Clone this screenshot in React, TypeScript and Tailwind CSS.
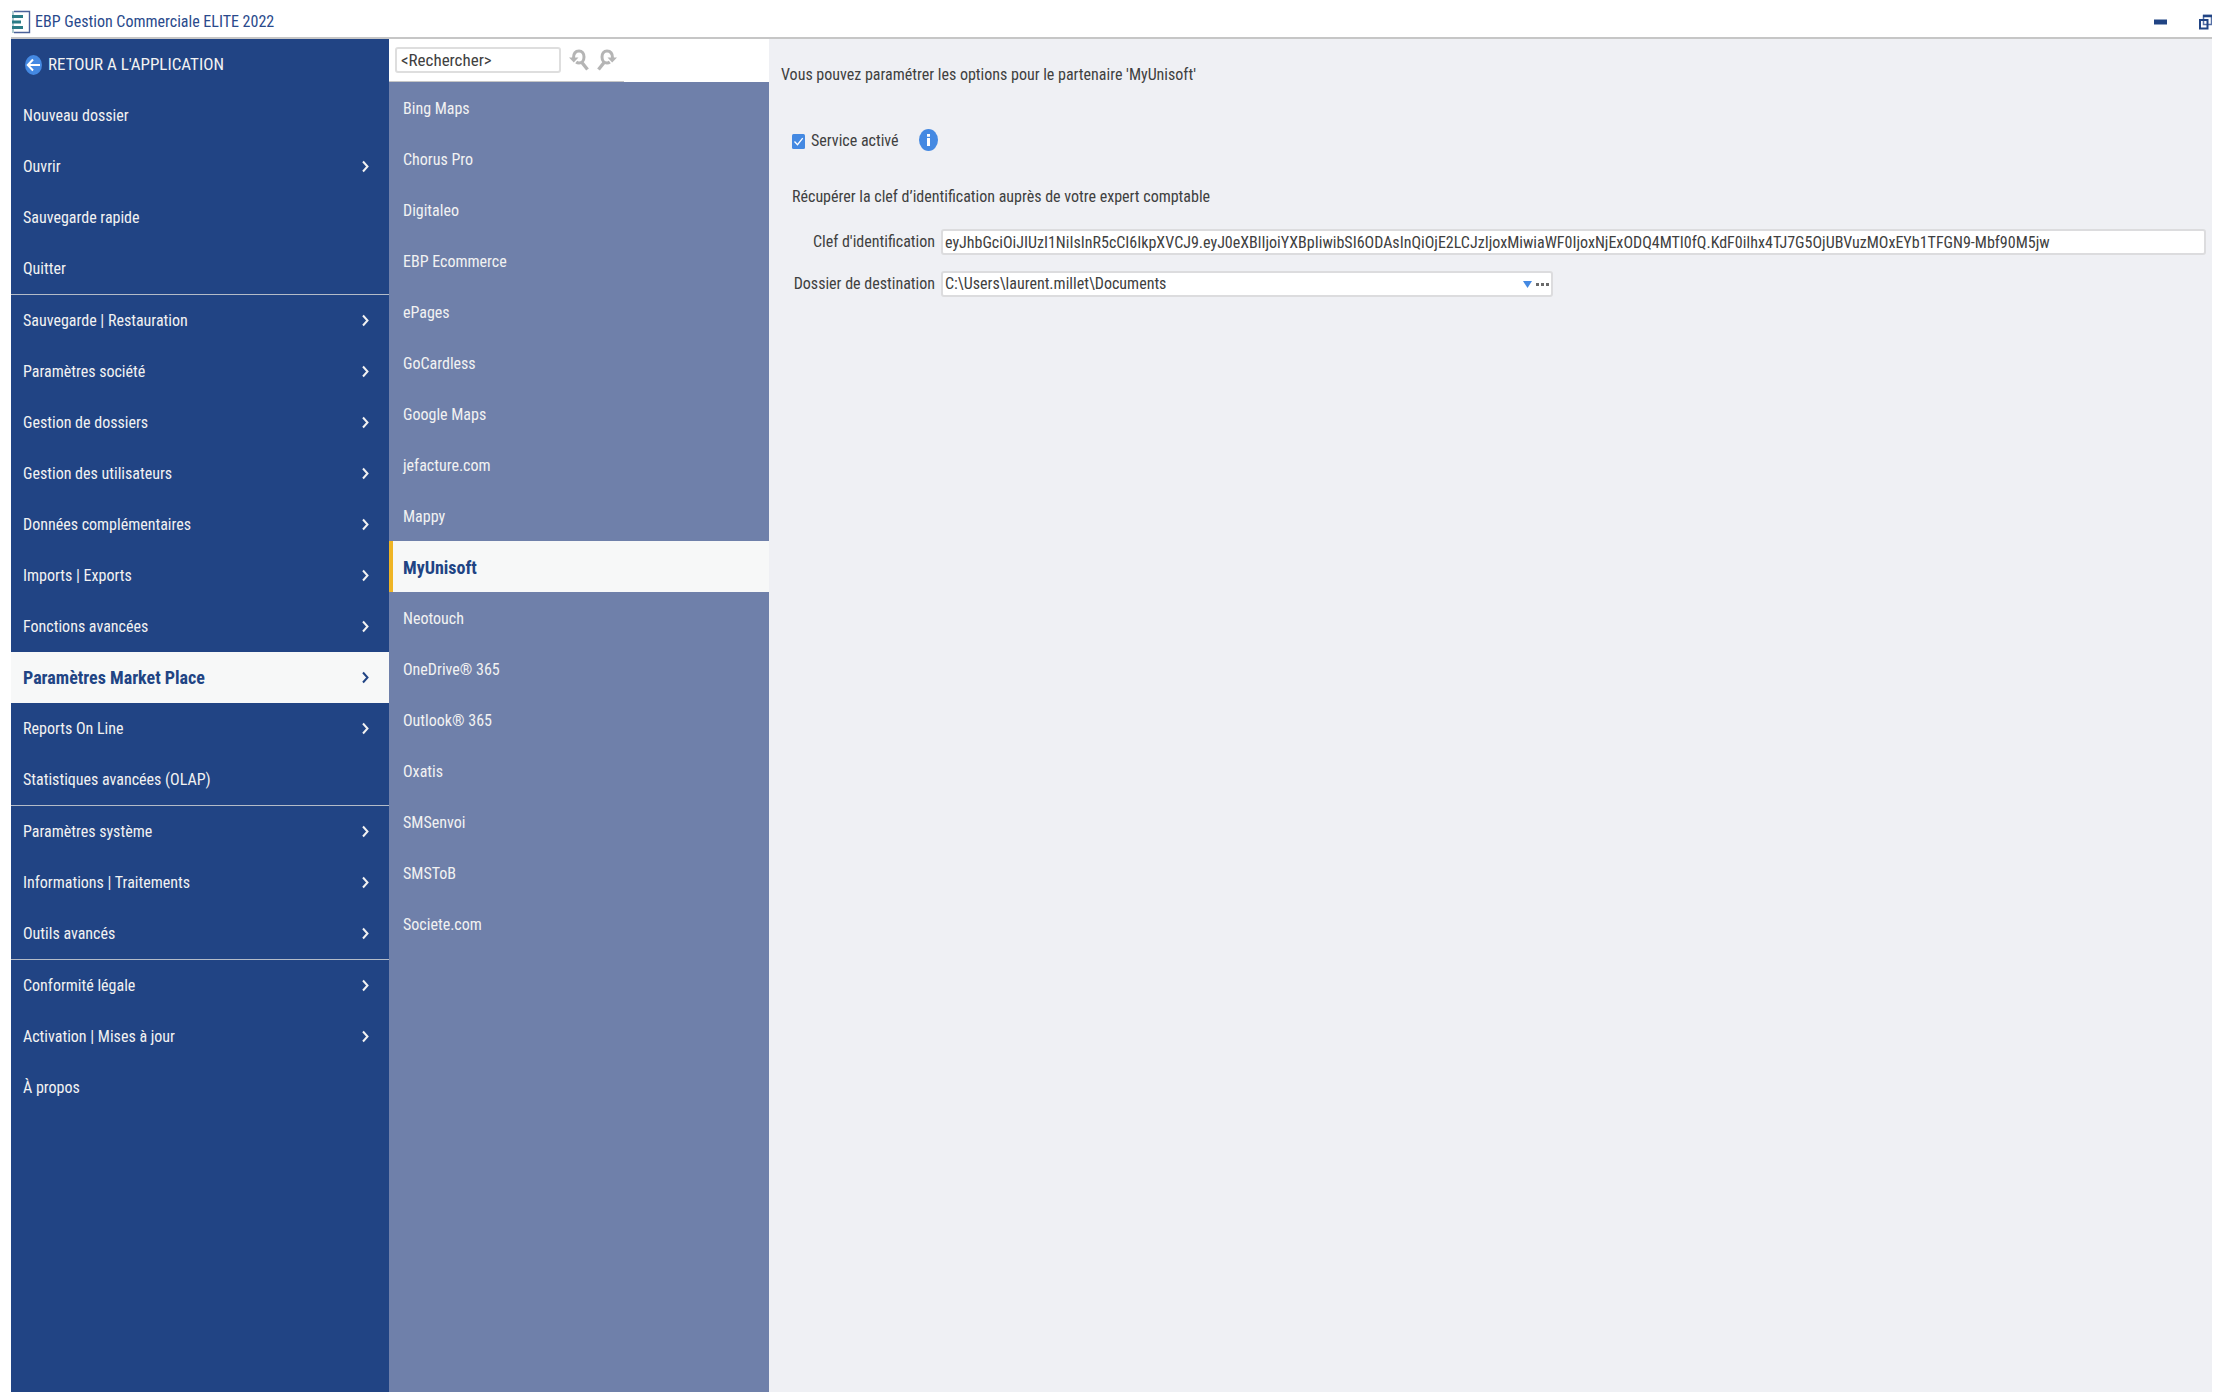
type MenuItem = { label: string; arrow?: boolean };

const menuGroups: MenuItem[][] = [
  [
    { label: "Nouveau dossier" },
    { label: "Ouvrir", arrow: true },
    { label: "Sauvegarde rapide" },
    { label: "Quitter" },
  ],
  [
    { label: "Sauvegarde | Restauration", arrow: true },
    { label: "Paramètres société", arrow: true },
    { label: "Gestion de dossiers", arrow: true },
    { label: "Gestion des utilisateurs", arrow: true },
    { label: "Données complémentaires", arrow: true },
    { label: "Imports | Exports", arrow: true },
    { label: "Fonctions avancées", arrow: true },
    { label: "Paramètres Market Place", arrow: true },
    { label: "Reports On Line", arrow: true },
    { label: "Statistiques avancées (OLAP)" },
  ],
  [
    { label: "Paramètres système", arrow: true },
    { label: "Informations | Traitements", arrow: true },
    { label: "Outils avancés", arrow: true },
  ],
  [
    { label: "Conformité légale", arrow: true },
    { label: "Activation | Mises à jour", arrow: true },
    { label: "À propos" },
  ],
];

const partners = [
  "Bing Maps",
  "Chorus Pro",
  "Digitaleo",
  "EBP Ecommerce",
  "ePages",
  "GoCardless",
  "Google Maps",
  "jefacture.com",
  "Mappy",
  "MyUnisoft",
  "Neotouch",
  "OneDrive® 365",
  "Outlook® 365",
  "Oxatis",
  "SMSenvoi",
  "SMSToB",
  "Societe.com",
];

const activeMenu = "Paramètres Market Place";
const activePartner = "MyUnisoft";

const apiKey =
  "eyJhbGciOiJIUzI1NiIsInR5cCI6IkpXVCJ9.eyJ0eXBlIjoiYXBpIiwibSI6ODAsInQiOjE2LCJzIjoxMiwiaWF0IjoxNjExODQ4MTI0fQ.KdF0iIhx4TJ7G5OjUBVuzMOxEYb1TFGN9-Mbf90M5jw";

function Logo() {
  return (
    <svg width="20" height="24" viewBox="0 0 20 24" fill="none" aria-hidden="true">
      <path d="M3 1.5h15.500v21H3" stroke="#4a6199" strokeWidth="1.4" />
      <path d="M2 1v22" stroke="#8fb5bd" strokeWidth="1.4" />
      <path d="M1 6.500h11M1 12h9M1 17.500h11" stroke="#2b7c86" strokeWidth="2.800" />
    </svg>
  );
}

function Chevron() {
  return (
    <svg width="7" height="13" viewBox="0 0 7 13" fill="none" aria-hidden="true">
      <path d="M1 1.500 5.500 6.500 1 11.500" stroke="currentColor" strokeWidth="2" />
    </svg>
  );
}

function SearchArrow({ flip = false }: { flip?: boolean }) {
  return (
    <svg
      width="20"
      height="22"
      viewBox="0 0 20 22"
      fill="none"
      aria-hidden="true"
      className={flip ? "-scale-x-100" : ""}
    >
      <path
        d="M4.500 9C4.500 4.300 6.800 2 10 2s5 2.700 5 6-2 6-5 6c-1 0-2-.3-2.800-1"
        stroke="#b5b5b5"
        strokeWidth="3"
      />
      <path d="M0 8.500h9.500L4.800 13.500z" fill="#b5b5b5" />
      <path d="m12.500 13 6 7.500" stroke="#b5b5b5" strokeWidth="3.400" />
    </svg>
  );
}

function TitleBar() {
  return (
    <header className="flex h-[39px] items-center justify-between border-b-2 border-[#c6c6c6] pt-1.5 text-[#2a4a8c]">
      <div className="flex items-center gap-1">
        <Logo />
        <h1>EBP Gestion Commerciale ELITE 2022</h1>
      </div>
      <div className="flex items-center gap-8">
        <button type="button" aria-label="Réduire">
          <svg width="13" height="6" viewBox="0 0 13 6" className="block" aria-hidden="true">
            <path d="M0 .5h13v5H0z" fill="#214484" />
          </svg>
        </button>
        <button type="button" aria-label="Restaurer">
          <svg
            width="13"
            height="16"
            viewBox="0 0 13 16"
            fill="none"
            stroke="#214484"
            className="block"
            aria-hidden="true"
          >
            <path d="M4.500 10V1.500h8v9H4.500z" stroke="#5670a6" strokeWidth="1.500" />
            <path d="M4 2h9" strokeWidth="2.500" />
            <path d="M1 6h7.500v8.500H1z" strokeWidth="2" />
          </svg>
        </button>
      </div>
    </header>
  );
}

function MainMenu() {
  return (
    <nav className="w-[378px] shrink-0 bg-[#214484] text-[#f2f2f2]">
      <button type="button" className="flex h-[51px] w-full items-center gap-1.5 px-3.5 text-[17px]">
        <svg width="17" height="20" viewBox="0 0 17 20" fill="none" aria-hidden="true">
          <ellipse cx="8.500" cy="10" rx="8.500" ry="10" fill="#4489e2" />
          <path d="M15 10H3M8 4.500 2.800 10 8 15.500" stroke="#fff" strokeWidth="2" />
        </svg>
        RETOUR A L'APPLICATION
      </button>
      {menuGroups.map((group, i) => (
        <ul key={i} className={i > 0 ? "border-t border-[#b4bcc8]" : ""}>
          {group.map((item) => (
            <li key={item.label}>
              <button
                type="button"
                className={`flex h-[51px] w-full items-center justify-between pr-5 pl-3 text-left ${
                  item.label === activeMenu ? "bg-[#f7f8f8] text-[18px] font-bold text-[#214484]" : ""
                }`}
              >
                {item.label}
                {item.arrow && <Chevron />}
              </button>
            </li>
          ))}
        </ul>
      ))}
    </nav>
  );
}

function PartnerList() {
  return (
    <aside className="w-[380px] shrink-0 bg-[#6f80aa] text-[#f2f2f2]">
      <div className="bg-white">
        <div className="flex h-[43px] w-[235px] items-center gap-2 border-b border-[#c6c6c6] px-1.5">
          <input
            type="text"
            aria-label="Rechercher"
            defaultValue="<Rechercher>"
            className="h-[26px] w-[166px] rounded-[3px] border-2 border-[#dedede] bg-white px-1 text-[17px] text-[#404040]"
          />
          <button type="button" aria-label="Précédent">
            <SearchArrow />
          </button>
          <button type="button" aria-label="Suivant">
            <SearchArrow flip />
          </button>
        </div>
      </div>
      <ul>
        {partners.map((name) => (
          <li key={name}>
            <button
              type="button"
              className={`flex h-[51px] w-full items-center pt-0.5 text-left ${
                name === activePartner
                  ? "border-l-4 border-[#efb525] bg-[#f7f8f8] pl-2.5 text-[18px] font-bold text-[#214484]"
                  : "pl-3.5"
              }`}
            >
              {name}
            </button>
          </li>
        ))}
      </ul>
    </aside>
  );
}

function PartnerSettings() {
  return (
    <main className="min-w-0 flex-1 bg-[#eff0f4] pt-6 pr-1.5 pl-3 text-[#404040]">
      <p>Vous pouvez paramétrer les options pour le partenaire 'MyUnisoft'</p>

      <div className="mt-10 flex items-center gap-5 pl-[11px]">
        <label className="flex items-center gap-1.5 pt-0.5">
          <input type="checkbox" defaultChecked className="peer sr-only" />
          <svg width="13" height="15" viewBox="0 0 13 15" fill="none" aria-hidden="true">
            <rect width="13" height="15" rx="1.500" fill="#4489e2" />
            <path d="m2.500 7.500 3 3.200 5.200-6.500" stroke="#fff" strokeWidth="1.300" />
          </svg>
          Service activé
        </label>
        <button type="button" aria-label="Informations">
          <svg width="19" height="22" viewBox="0 0 19 22" className="block" aria-hidden="true">
            <ellipse cx="9.500" cy="11" rx="9.500" ry="11" fill="#4489e2" />
            <path d="M8 5h3v2.800H8zM8 9h3v8H8z" fill="#fff" />
          </svg>
        </button>
      </div>

      <p className="mt-8 pl-[11px]">Récupérer la clef d’identification auprès de votre expert comptable</p>

      <div className="mt-5 grid grid-cols-[154px_1fr] items-center gap-x-1.5 gap-y-4">
        <label htmlFor="key" className="text-right">
          Clef d'identification
        </label>
        <input
          id="key"
          type="text"
          defaultValue={apiKey}
          className="h-[26px] w-full rounded-[3px] border-2 border-[#dcdcde] bg-white px-0.5"
        />
        <label htmlFor="folder" className="text-right">
          Dossier de destination
        </label>
        <div className="flex h-[26px] max-w-[612px] items-center gap-1 rounded-[3px] border-2 border-[#dcdcde] bg-white pr-0.5">
          <input
            id="folder"
            type="text"
            defaultValue="C:\Users\laurent.millet\Documents"
            className="min-w-0 flex-1 px-0.5"
          />
          <button type="button" aria-label="Dérouler">
            <svg width="9" height="7" viewBox="0 0 9 7" className="block" aria-hidden="true">
              <path d="M0 0h9L4.500 7z" fill="#4489e2" />
            </svg>
          </button>
          <button type="button" aria-label="Parcourir">
            <svg width="13" height="3" viewBox="0 0 13 3" className="block" aria-hidden="true">
              <path d="M0 0h3v3H0zM5 0h3v3H5zM10 0h3v3h-3z" fill="#6a6a6a" />
            </svg>
          </button>
        </div>
      </div>
    </main>
  );
}

export default function App() {
  return (
    <div className="flex min-h-screen flex-col bg-white pr-2.5 pb-2 pl-[11px] font-['Roboto_Condensed','Roboto',sans-serif] text-base">
      <TitleBar />
      <div className="flex flex-1">
        <MainMenu />
        <PartnerList />
        <PartnerSettings />
      </div>
    </div>
  );
}
